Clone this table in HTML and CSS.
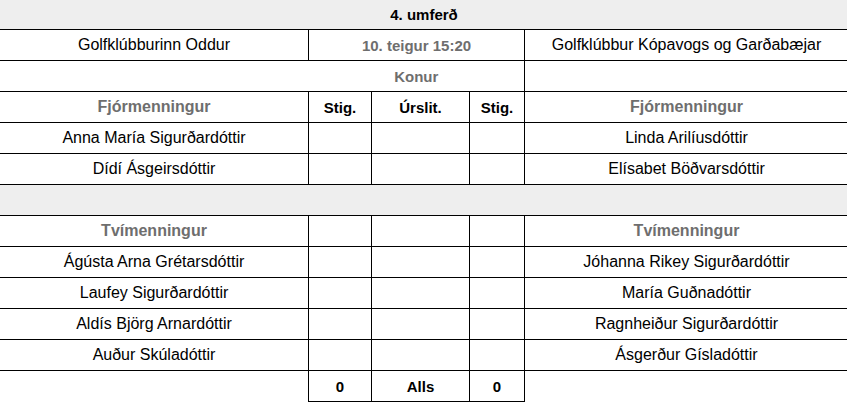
FILE: index.html
```html
<!DOCTYPE html>
<html>
<head>
<meta charset="utf-8">
<link rel="stylesheet" href="styles.css">
</head>
<body>
<table class="match">
  <colgroup>
    <col class="c-name">
    <col class="c-stig">
    <col class="c-res">
    <col class="c-stig2">
    <col class="c-name2">
  </colgroup>
  <tr class="round">
    <td colspan="5" class="bold small">4. umferð</td>
  </tr>
  <tr>
    <td>Golfklúbburinn Oddur</td>
    <td colspan="3" class="bold small muted">10. teigur 15:20</td>
    <td>Golfklúbbur Kópavogs og Garðabæjar</td>
  </tr>
  <tr>
    <td class="no-right"></td>
    <td colspan="3" class="bold small muted no-left">Konur</td>
    <td></td>
  </tr>
  <tr>
    <td class="bold muted">Fjórmenningur</td>
    <td class="bold small">Stig.</td>
    <td class="bold small">Úrslit.</td>
    <td class="bold small">Stig.</td>
    <td class="bold muted">Fjórmenningur</td>
  </tr>
  <tr>
    <td>Anna María Sigurðardóttir</td>
    <td></td><td></td><td></td>
    <td>Linda Arilíusdóttir</td>
  </tr>
  <tr>
    <td>Dídí Ásgeirsdóttir</td>
    <td></td><td></td><td></td>
    <td>Elísabet Böðvarsdóttir</td>
  </tr>
  <tr class="sep">
    <td colspan="5"></td>
  </tr>
  <tr>
    <td class="bold muted">Tvímenningur</td>
    <td></td><td></td><td></td>
    <td class="bold muted">Tvímenningur</td>
  </tr>
  <tr>
    <td>Ágústa Arna Grétarsdóttir</td>
    <td></td><td></td><td></td>
    <td>Jóhanna Rikey Sigurðardóttir</td>
  </tr>
  <tr>
    <td>Laufey Sigurðardóttir</td>
    <td></td><td></td><td></td>
    <td>María Guðnadóttir</td>
  </tr>
  <tr>
    <td>Aldís Björg Arnardóttir</td>
    <td></td><td></td><td></td>
    <td>Ragnheiður Sigurðardóttir</td>
  </tr>
  <tr>
    <td>Auður Skúladóttir</td>
    <td></td><td></td><td></td>
    <td>Ásgerður Gísladóttir</td>
  </tr>
  <tr class="total">
    <td class="blank"></td>
    <td class="bold small">0</td>
    <td class="bold small">Alls</td>
    <td class="bold small">0</td>
    <td class="blank"></td>
  </tr>
</table>
</body>
</html>
```
FILE: styles.css
```css
html, body {
  margin: 0;
  padding: 0;
  overflow: hidden;
  background: #fff;
}
.match {
  border-collapse: collapse;
  table-layout: fixed;
  width: 849px;
  margin: -1px 0 0 -1px;
  font-family: "Liberation Sans", Arial, sans-serif;
  font-size: 16px;
  color: #000;
}
.c-name { width: 309px; }
.c-stig { width: 63px; }
.c-res { width: 98px; }
.c-stig2 { width: 55px; }
.c-name2 { width: 324px; }
.match td {
  border: 1px solid #000;
  height: 31px;
  padding: 0;
  text-align: center;
  vertical-align: middle;
  box-sizing: border-box;
}
.match tr.round td {
  background: #eeeeee;
  height: 30px;
}
.match tr.sep td {
  background: #eeeeee;
}
.bold { font-weight: bold; }
.small { font-size: 15px; }
.muted { color: #6e6e6e; }
.match td.no-right { border-right: none; }
.match td.no-left { border-left: none; }
.match td.blank { border-left: none; border-right: none; border-bottom: none; }
```
